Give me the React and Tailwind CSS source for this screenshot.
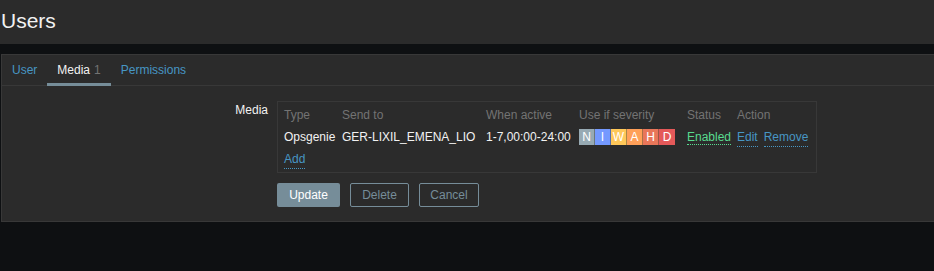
export default function App() {
  const sev = [
    ["N", "bg-[#97aab3]"],
    ["I", "bg-[#7499ff]"],
    ["W", "bg-[#ffc859]"],
    ["A", "bg-[#ffa059]"],
    ["H", "bg-[#e97659]"],
    ["D", "bg-[#e45959]"],
  ];
  return (
    <div className="w-[934px] h-[271px] bg-[#0e1012] text-[#f2f2f2] text-[12px] overflow-hidden" style={{ fontFamily: '"Liberation Sans", Arial, sans-serif' }}>
      <div className="h-[44px] bg-[#2b2b2b] pl-[1px] pt-[9px]">
        <h1 className="text-[21px] leading-[24px] font-normal text-[#f2f2f2]">Users</h1>
      </div>
      <div className="h-[10px]" />
      <div className="ml-[1px] h-[168px] bg-[#2b2b2b] border border-[#383838] border-r-0">
        <div className="flex h-[31px] border-b border-[#383838]">
          <div className="pl-[10px] pr-[10px] flex items-center text-[#4796c4]">User</div>
          <div className="px-[10px] flex items-center relative">
            <span className="text-[#f2f2f2]">Media</span>
            <span className="ml-[4px] text-[#737373]">1</span>
            <div className="absolute left-0 right-0 bottom-[-1px] h-[3px] bg-[#768d99]" />
          </div>
          <div className="px-[10px] flex items-center text-[#4796c4]">Permissions</div>
        </div>
        <div className="flex pt-[15px]">
          <div className="w-[266px] text-right text-[#f2f2f2] font-medium">Media</div>
          <div className="ml-[9px]">
            <div className="w-[540px] h-[72px] border border-[#383838] pt-[2px] pl-[6px]">
              <div className="grid grid-cols-[58px_144px_93px_108px_50px_auto] h-[22px] items-center text-[#737373]">
                <div>Type</div>
                <div>Send to</div>
                <div>When active</div>
                <div>Use if severity</div>
                <div>Status</div>
                <div>Action</div>
              </div>
              <div className="grid grid-cols-[58px_144px_93px_108px_50px_auto] h-[22px] items-center">
                <div>Opsgenie</div>
                <div>GER-LIXIL_EMENA_LIO</div>
                <div>1-7,00:00-24:00</div>
                <div className="flex">
                  {sev.map(([l, c]) => (
                    <div key={l} className={`${c} w-[16px] h-[16px] flex items-center justify-center text-white border-r border-[#2b2b2b]/40 last:border-r-0`}>
                      {l}
                    </div>
                  ))}
                </div>
                <div>
                  <span className="text-[#59db8f] border-b border-dotted border-[#59db8f]">Enabled</span>
                </div>
                <div className="flex gap-[6px]">
                  <span className="text-[#4796c4] border-b border-dotted border-[#4796c4]">Edit</span>
                  <span className="text-[#4796c4] border-b border-dotted border-[#4796c4]">Remove</span>
                </div>
              </div>
              <div className="h-[22px] flex items-center">
                <span className="text-[#4796c4] border-b border-dotted border-[#4796c4]">Add</span>
              </div>
            </div>
            <div className="flex gap-[10px] mt-[10px]">
              <button className="h-[24px] w-[63px] bg-[#768d99] text-white rounded-[2px] text-[12px]">Update</button>
              <button className="h-[24px] w-[59px] border border-[#768d99] text-[#768d99] rounded-[2px] text-[12px]">Delete</button>
              <button className="h-[24px] w-[60px] border border-[#768d99] text-[#768d99] rounded-[2px] text-[12px]">Cancel</button>
            </div>
          </div>
        </div>
      </div>
    </div>
  );
}
